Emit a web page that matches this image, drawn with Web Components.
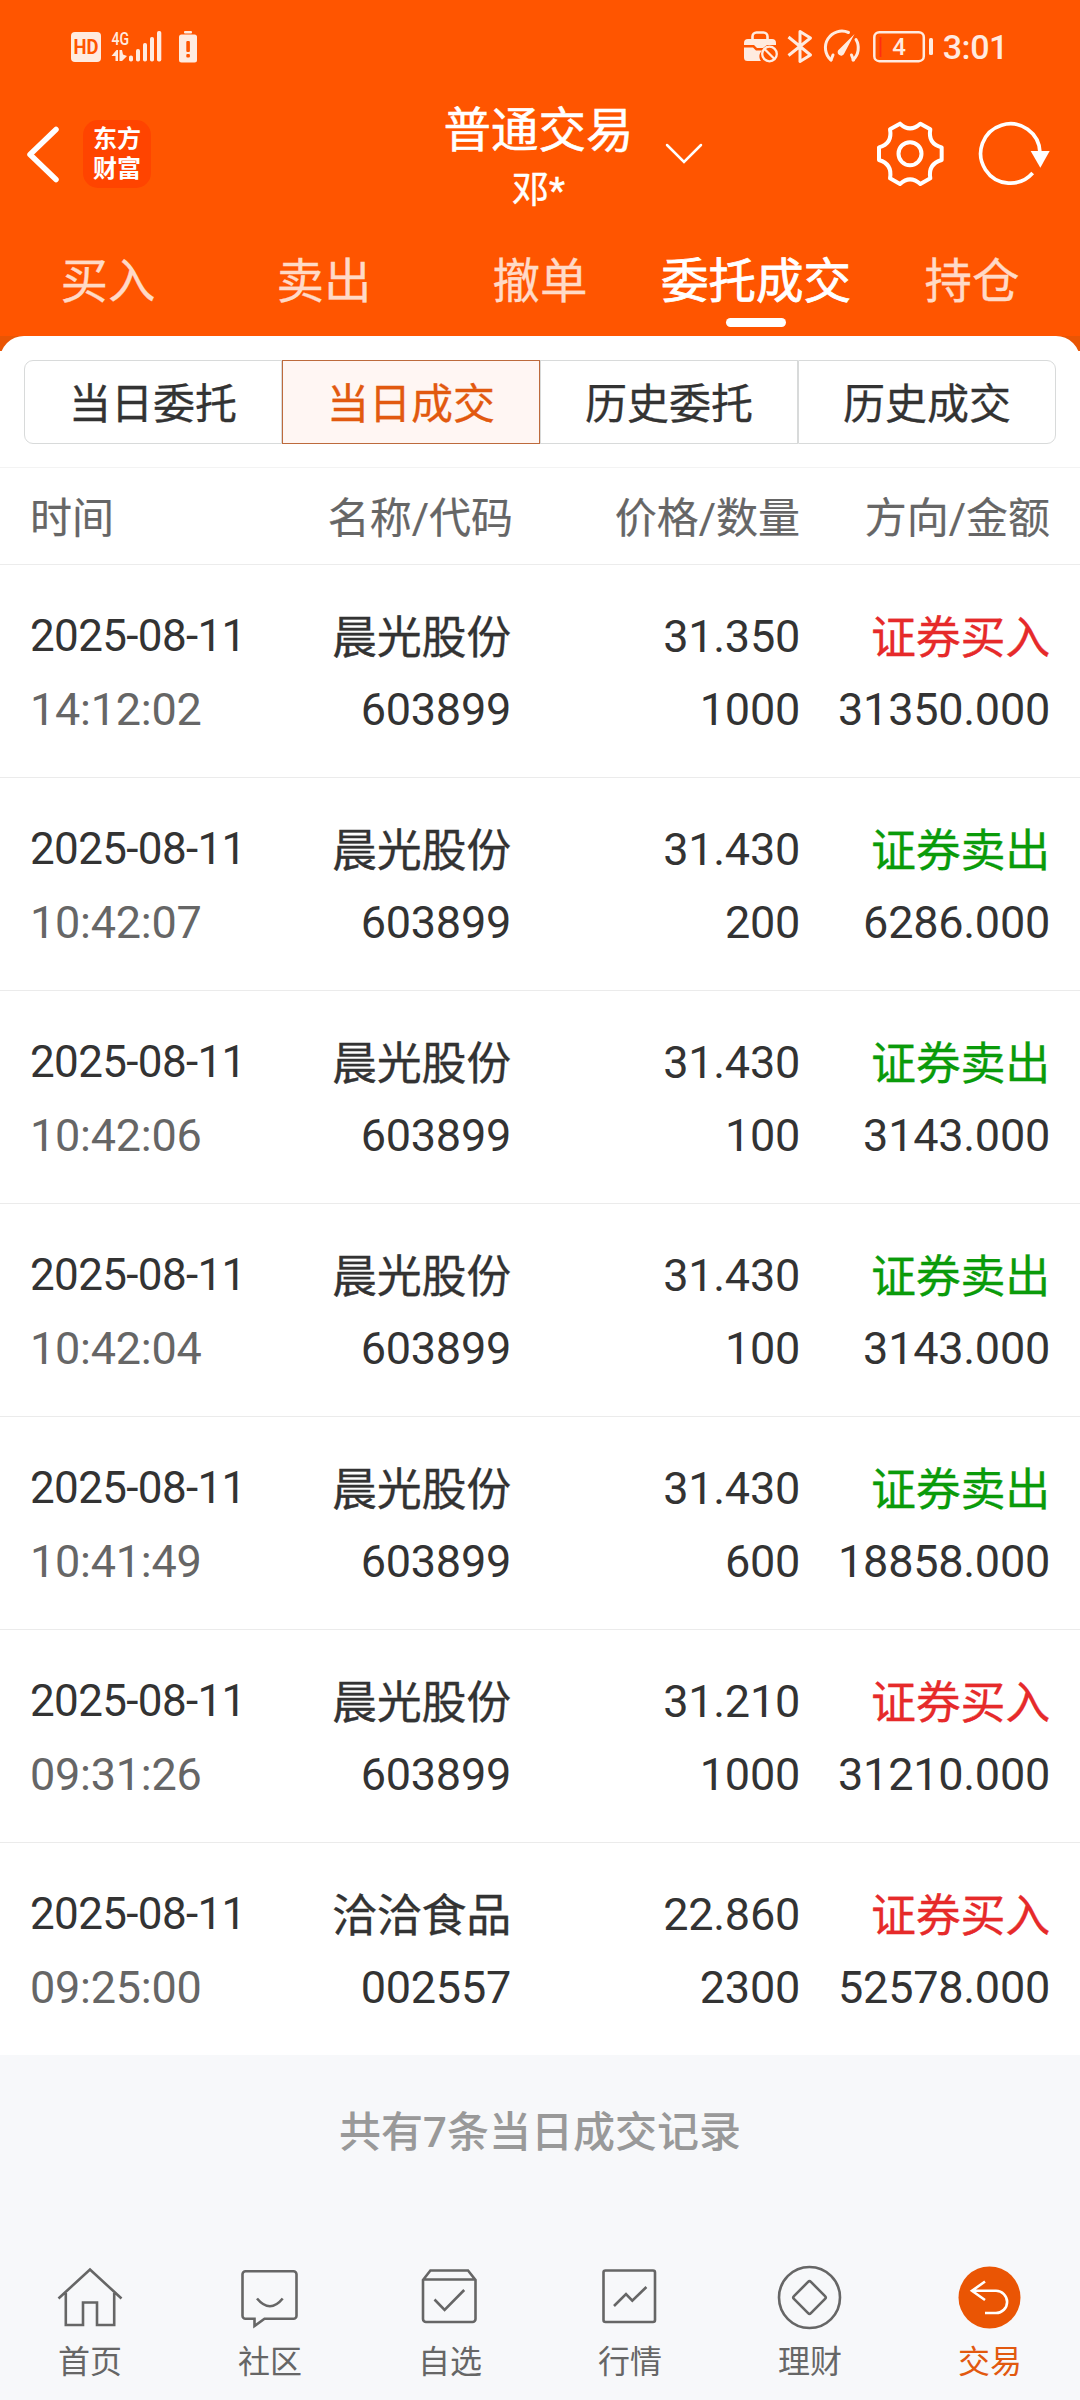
<!DOCTYPE html>
<html lang="zh-CN">
<head>
<meta charset="utf-8">
<title>普通交易</title>
<style>
    body {
        margin: 0;
        width: 1080px;
        height: 2400px;
        display: flex;
        flex-direction: column;
        overflow: hidden;
        background: #f7f8fa;
        color: #333;
        font-family: Roboto, "Noto Sans CJK SC", sans-serif;
    }
</style>
</head>
<body>
<status-bar time="3:01" battery="4"></status-bar>
<title-bar user="邓*">普通交易</title-bar>
<tab-bar>
    <tab-item>买入</tab-item>
    <tab-item>卖出</tab-item>
    <tab-item>撤单</tab-item>
    <tab-item active>委托成交</tab-item>
    <tab-item>持仓</tab-item>
</tab-bar>
<segment-bar>
    <segment-item>当日委托</segment-item>
    <segment-item active>当日成交</segment-item>
    <segment-item>历史委托</segment-item>
    <segment-item>历史成交</segment-item>
</segment-bar>
<list-head>
    <span>时间</span>
    <span>名称/代码</span>
    <span>价格/数量</span>
    <span>方向/金额</span>
</list-head>
<trade-row date="2025-08-11" time="14:12:02" name="晨光股份" code="603899" price="31.350" count="1000" side="buy" total="31350.000"></trade-row>
<trade-row date="2025-08-11" time="10:42:07" name="晨光股份" code="603899" price="31.430" count="200" side="sell" total="6286.000"></trade-row>
<trade-row date="2025-08-11" time="10:42:06" name="晨光股份" code="603899" price="31.430" count="100" side="sell" total="3143.000"></trade-row>
<trade-row date="2025-08-11" time="10:42:04" name="晨光股份" code="603899" price="31.430" count="100" side="sell" total="3143.000"></trade-row>
<trade-row date="2025-08-11" time="10:41:49" name="晨光股份" code="603899" price="31.430" count="600" side="sell" total="18858.000"></trade-row>
<trade-row date="2025-08-11" time="09:31:26" name="晨光股份" code="603899" price="31.210" count="1000" side="buy" total="31210.000"></trade-row>
<trade-row date="2025-08-11" time="09:25:00" name="洽洽食品" code="002557" price="22.860" count="2300" side="buy" total="52578.000"></trade-row>
<list-foot>共有7条当日成交记录</list-foot>
<bottom-nav>
    <nav-item icon="home">首页</nav-item>
    <nav-item icon="chat">社区</nav-item>
    <nav-item icon="pick">自选</nav-item>
    <nav-item icon="market">行情</nav-item>
    <nav-item icon="wealth">理财</nav-item>
    <nav-item icon="trade" active>交易</nav-item>
</bottom-nav>

<script>
// attach an open shadow root with the given markup
function fill(el, html) {
    const template = document.createElement('template');
    template.innerHTML = html;
    el.attachShadow({mode: 'open'});
    el.shadowRoot.appendChild(template.content.cloneNode(true));
}

//statusBar
class StatusBar extends HTMLElement {
    constructor(){
        super();
        fill(this, `
<style>
    :host {
        display: flex;
        justify-content: space-between;
        height: 92px;
        box-sizing: border-box;
        padding: 24px 72px 0 65px;
        background: #ff5500;
        color: #ffebe0;
    }
    .right {
        display: flex;
        gap: 9px;
    }
    svg {
        display: block;
    }
    .time {
        font-size: 34px;
        font-weight: 500;
        line-height: 46px;
        letter-spacing: -0.4px;
    }
</style>
<svg width="140" height="46" viewBox="65 24 140 46" fill="#ffebe0">
    <rect x="71" y="32" width="30" height="30" rx="4"/>
    <text x="86" y="54" text-anchor="middle" font-size="20" font-weight="700" fill="#ff5500" textLength="25" lengthAdjust="spacingAndGlyphs">HD</text>
    <text x="111.500" y="45" font-size="19" font-weight="500" textLength="17.500" lengthAdjust="spacingAndGlyphs">4G</text>
    <path d="M111.500 56l5-6h1.500v11h-2.500v-5zM119.500 50h2.500l1 4.500 4 1.500-5 5h-2.500z"/>
    <rect x="129" y="55.500" width="4" height="6" rx="1.800"/>
    <rect x="136" y="49" width="4" height="12.500" rx="1.800"/>
    <rect x="143" y="43" width="4" height="18.500" rx="1.800"/>
    <rect x="150" y="37" width="4" height="24.500" rx="1.800"/>
    <rect x="157" y="31" width="4.300" height="30.500" rx="1.800"/>
    <rect x="184" y="31" width="8" height="2.500" rx="1"/>
    <rect x="179" y="34.500" width="18" height="28" rx="2.500"/>
    <rect x="186.300" y="41" width="3.600" height="11" rx="1" fill="#ff5500"/>
    <rect x="186.300" y="54" width="3.600" height="3.500" rx="1" fill="#ff5500"/>
</svg>
<div class="right">
    <svg width="197" height="46" viewBox="738 24 197 46" fill="none" stroke="#ffebe0">
        <path d="M753.500 39v-2.500a4 4 0 0 1 4-4h7a4 4 0 0 1 4 4v2.500" stroke-width="2.600"/>
        <path d="M745 45v-2a4 4 0 0 1 4-4h24a4 4 0 0 1 4 4v2h-9l-4 3h-6l-3-3z" fill="#ffebe0" stroke="none"/>
        <path d="M745 47.500h9l3 3h6c-3 3-3.500 7-1 10.500h-13.500a3.500 3.500 0 0 1-3.500-3.500z" fill="#ffebe0" stroke="none"/>
        <circle cx="770.500" cy="54" r="7.300" stroke-width="2.300"/>
        <path d="M765.500 49l10 10" stroke-width="2.300"/>
        <path d="M789.500 37l22 18-10.500 6.500v-30l10.500 6.500-22 17.500" stroke-width="3" stroke-linejoin="round"/>
        <path d="M832 60A16.500 16.500 0 0 1 849.500 32.500M857 39.500A16.500 16.500 0 0 1 854 60" stroke-width="3" stroke-linecap="round"/>
        <path d="M834 55l-2 5M852.500 55l2 5" stroke-width="3" stroke-linecap="round"/>
        <path d="M855.500 34l-15 15a3.500 3.500 0 1 0 5 4z" fill="#ffebe0" stroke="none"/>
        <rect x="875.300" y="32.200" width="49.500" height="29" rx="5" stroke-width="2.500"/>
        <path d="M881.500 37v20" stroke="#ff2d12" stroke-width="1.800"/>
        <rect x="930" y="38" width="4" height="17" rx="1.500" fill="#ffebe0" stroke="none"/>
        <text class="level" x="900" y="54.500" text-anchor="middle" font-size="24" font-weight="500" fill="#ffebe0" stroke="none"></text>
    </svg>
    <div class="time"></div>
</div>`);
        this.shadowRoot.querySelector('.time').textContent = this.getAttribute('time');
        this.shadowRoot.querySelector('.level').textContent = this.getAttribute('battery');
    }
}
customElements.define('status-bar', StatusBar);

//titleBar
class TitleBar extends HTMLElement {
    constructor(){
        super();
        fill(this, `
<style>
    :host {
        display: grid;
        grid-template-columns: 1fr 200px 1fr;
        grid-template-rows: 124px;
        height: 124px;
        background: #ff5500;
        color: #fff;
    }
    .left, .right {
        display: flex;
        align-items: center;
    }
    .left {
        padding-left: 24px;
        gap: 21px;
    }
    .right {
        justify-content: space-between;
        padding: 0 27px 0 24px;
    }
    .icons {
        display: flex;
        gap: 32px;
    }
    .logo {
        display: flex;
        flex-direction: column;
        width: 68px;
        height: 68px;
        box-sizing: border-box;
        padding-top: 5px;
        border-radius: 15px;
        background: #ff4400;
        font-size: 24px;
        font-weight: 700;
        line-height: 29.500px;
        text-align: center;
    }
    .title {
        display: flex;
        flex-direction: column;
        align-items: center;
        white-space: nowrap;
        padding-top: 9px;
        margin-left: -3px;
        -webkit-text-stroke: 0.500px #fff;
    }
    .name {
        font-size: 47.500px;
        line-height: 60px;
    }
    .user {
        font-size: 37px;
        line-height: 60px;
    }
</style>
<div class="left">
    <svg width="38" height="60" viewBox="24 124 38 60" fill="none" stroke="#fff" stroke-width="5.500" stroke-linecap="round" stroke-linejoin="round">
        <path d="M56 129.500L30 154.500L56 179.500"/>
    </svg>
    <div class="logo"><span>东方</span><span>财富</span></div>
</div>
<div class="title">
    <div class="name"><slot></slot></div>
    <div class="user"></div>
</div>
<div class="right">
    <svg width="40" height="24" viewBox="664 141 40 24" fill="none" stroke="#fff" stroke-width="2.500" stroke-linecap="round">
        <path d="M667 144l17 17 17-17"/>
    </svg>
    <div class="icons">
        <svg width="70" height="70" viewBox="466 357 210 210" fill="none" stroke="#fff" stroke-width="12" stroke-linejoin="round">
            <path d="M541 371Q571 399 602 371L632 388Q624 431 666 442V480Q624 492 632 535L602 552Q571 524 541 552L511 535Q519 492 478 480V442Q519 431 511 388Z"/>
            <circle cx="571" cy="461" r="34.500"/>
        </svg>
        <svg width="76" height="70" viewBox="772 357 228 210" fill="none" stroke="#fff" stroke-width="11">
            <path d="M961 458A89 89 0 1 0 939 519"/>
            <path d="M933 453h57l-28 50z" fill="#fff" stroke="none"/>
        </svg>
    </div>
</div>`);
        this.shadowRoot.querySelector('.user').textContent = this.getAttribute('user');
    }
}
customElements.define('title-bar', TitleBar);

//tabs
class TabBar extends HTMLElement {
    constructor(){
        super();
        fill(this, `
<style>
    :host {
        display: grid;
        grid-template-columns: repeat(5, 216px);
        height: 120px;
        background: #ff5500;
    }
</style>
<slot></slot>`);
    }
}
customElements.define('tab-bar', TabBar);

class TabItem extends HTMLElement {
    constructor(){
        super();
        fill(this, `
<style>
    :host {
        display: flex;
        flex-direction: column;
        align-items: center;
        padding-top: 36px;
        color: #ffdac7;
        font-size: 47.500px;
        line-height: 60px;
        white-space: nowrap;
        -webkit-text-stroke: 0.300px;
    }
    :host([active]) {
        color: #fff;
        -webkit-text-stroke: 0.800px;
    }
    :host([active])::after {
        content: "";
        width: 60px;
        height: 9px;
        margin-top: 6px;
        border-radius: 4.500px;
        background: #fff;
    }
</style>
<slot></slot>`);
    }
}
customElements.define('tab-item', TabItem);

//segments, the rounded sheet starts here
class SegmentBar extends HTMLElement {
    constructor(){
        super();
        fill(this, `
<style>
    :host {
        display: block;
        height: 131px;
        background: linear-gradient(#e95504 15px, #fff 15px);
    }
    .sheet {
        height: 131px;
        box-sizing: border-box;
        padding: 24px 24px 0;
        border-radius: 24px 24px 0 0;
        background: #fff;
    }
    .box {
        display: grid;
        grid-template-columns: repeat(4, 258px);
        height: 84px;
    }
    ::slotted(:first-child) {
        border-radius: 9px 0 0 9px;
    }
    ::slotted(:last-child) {
        border-radius: 0 9px 9px 0;
    }
</style>
<div class="sheet"><div class="box"><slot></slot></div></div>`);
    }
}
customElements.define('segment-bar', SegmentBar);

class SegmentItem extends HTMLElement {
    constructor(){
        super();
        fill(this, `
<style>
    :host {
        display: block;
        box-sizing: border-box;
        padding-top: 5px;
        border: 1px solid #d8dada;
        font-size: 42px;
        line-height: 77px;
        text-align: center;
        -webkit-text-stroke: 0.300px;
    }
    :host([active]) {
        border-color: #bd6a3c;
        background: #fff6f3;
        color: #e2590f;
    }
</style>
<slot></slot>`);
    }
}
customElements.define('segment-item', SegmentItem);

//list
class ListHead extends HTMLElement {
    constructor(){
        super();
        fill(this, `
<style>
    :host {
        display: grid;
        grid-template-columns: 240px 243px 287px 250px;
        grid-template-rows: 96px;
        height: 98px;
        box-sizing: border-box;
        padding: 0 30px;
        border-top: 1px solid #f3f3f3;
        border-bottom: 1px solid #ececec;
        background: #fff;
        color: #666;
        font-size: 42px;
        line-height: 101px;
        text-align: right;
        -webkit-text-stroke: 0.200px;
    }
    ::slotted(:first-child) {
        text-align: left;
    }
</style>
<slot></slot>`);
    }
}
customElements.define('list-head', ListHead);

class TradeRow extends HTMLElement {
    constructor(){
        super();
        fill(this, `
<style>
    :host {
        display: grid;
        grid-template-columns: 240px 241px 289px 250px;
        grid-template-rows: 73px 73px;
        height: 213px;
        box-sizing: border-box;
        padding: 35px 30px 0;
        border-bottom: 1px solid #ebebeb;
        background: #fff;
        font-size: 45px;
        line-height: 73px;
        letter-spacing: -0.250px;
        text-align: right;
        white-space: nowrap;
    }
    :host(:last-of-type) {
        height: 212px;
        border-bottom: 0;
    }
    .date, .time {
        text-align: left;
    }
    .date {
        font-size: 44px;
        letter-spacing: -0.650px;
    }
    .time {
        color: #666;
    }
    .name, .side {
        padding-top: 2px;
        -webkit-text-stroke: 0.300px;
    }
    .side.buy {
        color: #e62a2a;
    }
    .side.sell {
        color: #0a9b0a;
    }
</style>
<span class="date"></span>
<span class="name"></span>
<span class="price"></span>
<span class="side"></span>
<span class="time"></span>
<span class="code"></span>
<span class="count"></span>
<span class="total"></span>`);
        for (const key of ['date', 'time', 'name', 'code', 'price', 'count', 'total']) {
            this.shadowRoot.querySelector('.' + key).textContent = this.getAttribute(key);
        }
        const side = this.shadowRoot.querySelector('.side');
        side.classList.add(this.getAttribute('side'));
        side.textContent = this.getAttribute('side') === 'buy' ? '证券买入' : '证券卖出';
    }
}
customElements.define('trade-row', TradeRow);

class ListFoot extends HTMLElement {
    constructor(){
        super();
        fill(this, `
<style>
    :host {
        display: block;
        flex: 1;
        padding-top: 48px;
        color: #999;
        font-size: 42px;
        font-weight: 500;
        line-height: 60px;
        text-align: center;
    }
</style>
<slot></slot>`);
    }
}
customElements.define('list-foot', ListFoot);

//bottom navigation
const icons = {
    home: `<path d="M4.500 36.500L36 7.500L67.500 36.500M11.800 31V63H29V40.500H43V63H60.200V31"/>`,
    chat: `<path d="M11.500 9.300H59.500A3 3 0 0 1 62.500 12.300V53.700A3 3 0 0 1 59.500 56.700H30.500L20.500 64V56.700H11.500A3 3 0 0 1 8.500 53.700V12.300A3 3 0 0 1 11.500 9.300Z"/><path d="M23 36.500Q36 52 48.700 36.500"/>`,
    pick: `<path d="M9 18L16.400 8.500H54L61.500 18V57A3 3 0 0 1 58.500 60H12A3 3 0 0 1 9 57ZM9 17.500H61.500"/><path d="M20.500 37.500L30.600 47.800L50.200 28"/>`,
    market: `<rect x="9.500" y="8.500" width="51.500" height="51.500" rx="2"/><path d="M20 44L32 32L38.300 38.700L52.400 25"/>`,
    wealth: `<circle cx="35.500" cy="35.500" r="30.500"/><rect x="23.500" y="23.500" width="24" height="24" rx="2" transform="rotate(45 35.500 35.500)"/>`,
    trade: `<circle cx="35.500" cy="35.500" r="31" fill="#ea5504" stroke="none"/><path d="M31 19.500L18 28.800L31 38M18 28.800H42A11.100 11.100 0 0 1 42 51H31" stroke="#fff"/>`
};

class BottomNav extends HTMLElement {
    constructor(){
        super();
        fill(this, `
<style>
    :host {
        display: grid;
        grid-template-columns: repeat(6, 180px);
        height: 138px;
    }
</style>
<slot></slot>`);
    }
}
customElements.define('bottom-nav', BottomNav);

class NavItem extends HTMLElement {
    constructor(){
        super();
        fill(this, `
<style>
    :host {
        display: flex;
        flex-direction: column;
        align-items: center;
        color: #666;
        font-size: 32px;
        line-height: 56px;
    }
    :host([active]) {
        color: #e2590f;
    }
</style>
<svg width="72" height="72" viewBox="0 0 72 72" fill="none" stroke="#666" stroke-width="2.600">${icons[this.getAttribute('icon')]}</svg>
<span><slot></slot></span>`);
    }
}
customElements.define('nav-item', NavItem);
</script>
</body>
</html>
